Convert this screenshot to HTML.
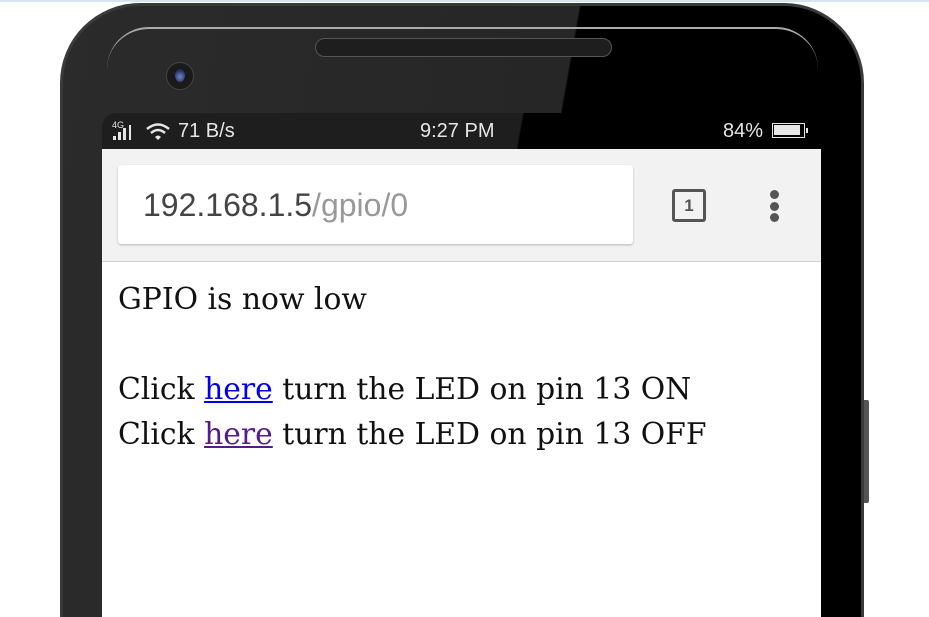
<!DOCTYPE html>
<html><head><meta charset="utf-8"><style>
html,body{margin:0;padding:0;width:929px;height:617px;overflow:hidden;background:#fff;}
body{position:relative;font-family:"Liberation Sans",sans-serif;}
.topline{position:absolute;left:0;top:0;width:929px;height:2px;background:#d6e4f0;}
.phone{position:absolute;left:60px;top:3px;width:804px;height:614px;border-radius:80px 80px 0 0;background:#3a3a3a;}
.phone2{position:absolute;left:63px;top:6px;width:798px;height:611px;border-radius:77px 77px 0 0;background:linear-gradient(100deg,#2b2b2b 0%,#262626 57%,#000 57.2%,#000 100%);overflow:hidden;}
.rim{position:absolute;left:107px;top:27px;width:711px;height:40px;border-top:2px solid #aaa;border-radius:50px 50px 0 0;}
.speaker{position:absolute;left:315px;top:38px;width:297px;height:19px;border-radius:10px;background:#1e1e1e;border:1px solid #555;box-sizing:border-box;}
.cam{position:absolute;left:166px;top:62px;width:28px;height:28px;border-radius:50%;background:#1a1a1a;border:1px solid #444;box-sizing:border-box;}
.cam::after{content:"";position:absolute;left:8px;top:6px;width:10px;height:13px;border-radius:50%;background:radial-gradient(circle at 50% 60%,#6f86c9,#223060 70%);}
.btn{position:absolute;left:864px;top:400px;width:5px;height:103px;background:#555;border-radius:0 2px 2px 0;}
.status{position:absolute;left:102px;top:113px;width:719px;height:36px;background:linear-gradient(100deg,#1e1e1e 0%,#1e1e1e 58%,#000 58.2%);border-radius:14px 14px 0 0;color:#e6e6e6;font-size:20px;}
.screen{position:absolute;left:102px;top:149px;width:719px;height:468px;background:#fff;overflow:hidden;}
.toolbar{position:absolute;left:0;top:0;width:719px;height:112px;background:#f2f2f2;border-bottom:1px solid #d0d0d0;}
.url{position:absolute;left:16px;top:16px;width:515px;height:79px;background:#fff;border-radius:3px;box-shadow:0 1px 2px rgba(0,0,0,.25);}
.url span{position:absolute;left:25px;top:22px;font-size:32px;color:#444;white-space:nowrap;}
.url span i{font-style:normal;color:#999;}
.tab{position:absolute;left:570px;top:40px;width:34px;height:33px;border:3px solid #555;border-radius:3px;box-sizing:border-box;font-size:17px;font-weight:bold;color:#555;text-align:center;line-height:27px;}
.dot{position:absolute;left:668px;width:9px;height:9px;border-radius:50%;background:#555;}
.content{position:absolute;left:16px;top:128px;font-family:"DejaVu Serif",serif;font-size:29.8px;line-height:45px;color:#111;white-space:nowrap;}
a{color:#0000ee;}a.v{color:#551a8b;}
</style></head><body>
<div class="topline"></div>
<div class="phone"></div>
<div class="phone2"></div>
<div class="rim"></div>
<div class="speaker"></div>
<div class="cam"></div>
<div class="btn"></div>
<div class="status">
 <span style="position:absolute;left:10px;top:7px;font-size:9px;">4G</span>
 <svg style="position:absolute;left:10px;top:10px" width="30" height="20"><rect x="1" y="13" width="3" height="4" fill="#e6e6e6"/><rect x="6" y="9" width="3" height="8" fill="#e6e6e6"/><rect x="11" y="5" width="3" height="12" fill="#e6e6e6"/><rect x="17" y="2" width="2" height="15" fill="#e6e6e6"/></svg>
 <svg style="position:absolute;left:43px;top:9px" width="28" height="20"><path d="M2 7 Q13 -2 24 7" stroke="#e6e6e6" stroke-width="2.5" fill="none"/><path d="M6 11 Q13 5 20 11" stroke="#e6e6e6" stroke-width="2.5" fill="none"/><path d="M10 15 L13 18 L16 15 Q13 12 10 15Z" fill="#e6e6e6"/></svg>
 <span style="position:absolute;left:76px;top:7px;">71 B/s</span>
 <span style="position:absolute;left:318px;top:7px;">9:27 PM</span>
 <span style="position:absolute;left:621px;top:7px;">84%</span>
 <div style="position:absolute;left:670px;top:10px;width:33px;height:15px;border:1.5px solid #e6e6e6;box-sizing:border-box;"><div style="margin:1px;width:26px;height:10px;background:#e6e6e6"></div></div>
 <div style="position:absolute;left:704px;top:15px;width:2px;height:5px;background:#e6e6e6"></div>
</div>
<div class="screen">
 <div class="toolbar">
  <div class="url"><span>192.168.1.5<i>/gpio/0</i></span></div>
  <div class="tab">1</div>
  <div class="dot" style="top:41px"></div><div class="dot" style="top:53px"></div><div class="dot" style="top:64px"></div>
 </div>
 <div class="content">GPIO is now low<br><br>Click <a href="#">here</a> turn the LED on pin 13 ON<br>Click <a class="v" href="#">here</a> turn the LED on pin 13 OFF</div>
</div>
</body></html>
